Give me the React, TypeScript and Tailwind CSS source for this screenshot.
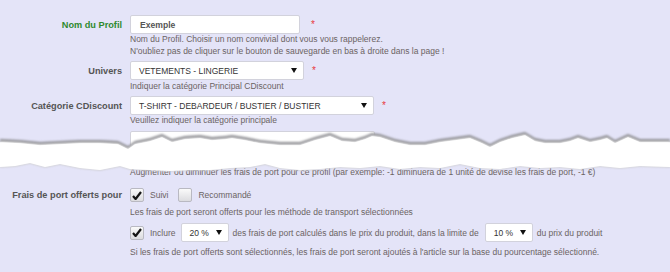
import React from "react";

const font = { fontFamily: '"Liberation Sans", Arial, sans-serif' };

function Star() {
  return <span className="ml-[8px] text-[10px] leading-none text-[#e8383d]">*</span>;
}

function Arrow() {
  return (
    <svg width="6" height="5" viewBox="0 0 6 5" className="shrink-0">
      <path d="M0 0 H6 L3 5 Z" fill="#111" />
    </svg>
  );
}

function Select({ value, w }: { value: string; w: string }) {
  return (
    <div
      className={`flex h-[19px] ${w} items-center justify-between rounded-[2px] border border-[#d2d2dc] bg-white pl-[8px] pr-[6px] text-[8.5px] text-[#333]`}
    >
      <span>{value}</span>
      <Arrow />
    </div>
  );
}

function Check({ on }: { on?: boolean }) {
  return (
    <div className="flex h-[14px] w-[14px] items-center justify-center rounded-[2px] border border-[#b9b9c2] bg-gradient-to-b from-[#fafafa] to-[#dcdce0]">
      {on ? (
        <svg width="10" height="9" viewBox="0 0 10 9">
          <path d="M1 5 L3.6 8 L9 1" fill="none" stroke="#151515" strokeWidth="2.2" strokeLinejoin="round" />
        </svg>
      ) : null}
    </div>
  );
}

function Row({
  label,
  green,
  children,
}: {
  label: string;
  green?: boolean;
  children: React.ReactNode;
}) {
  return (
    <div className="flex items-center text-[9px] leading-[12px]">
      <div
        className={`w-[122px] shrink-0 text-right text-[9.2px] font-bold ${green ? "text-[#2f8a2f]" : "text-[#555]"}`}
      >
        {label}
      </div>
      <div className="ml-[8px] flex items-center">{children}</div>
    </div>
  );
}

function Help({ children }: { children: React.ReactNode }) {
  return <div className="ml-[130px] text-[8.5px] leading-[12px] text-[#6b6363]">{children}</div>;
}

// torn paper edge, top and bottom outlines (x, y inside the 50px strip)
const top = [
  [0, 11], [20, 12], [40, 14], [60, 13], [80, 12], [100, 12], [118, 13], [128, 18], [135, 13],
  [150, 10], [162, 6], [172, 11], [185, 8], [200, 7], [212, 9], [225, 8], [232, 7], [245, 9],
  [260, 12], [280, 14], [300, 14], [315, 9], [330, 5], [342, 10], [355, 11], [365, 8], [372, 5],
  [380, 6], [395, 11], [410, 14], [425, 14], [440, 11], [455, 9], [470, 7], [482, 12], [490, 16],
  [500, 11], [512, 7], [525, 4], [535, 10], [545, 12], [560, 12], [570, 10], [578, 7], [590, 11],
  [600, 9], [607, 7], [615, 12], [628, 6], [640, 11], [655, 11], [670, 11],
];

const bottom = [
  [670, 41], [640, 40], [620, 42], [600, 40], [580, 43], [560, 41], [540, 42], [520, 40],
  [500, 43], [480, 42], [460, 38], [440, 42], [420, 41], [400, 43], [380, 40], [360, 42],
  [340, 41], [320, 43], [300, 44], [280, 42], [265, 38], [250, 41], [230, 42], [210, 44],
  [190, 44], [170, 45], [150, 44], [130, 43], [120, 40], [100, 44], [80, 42], [60, 38],
  [45, 41], [30, 37], [15, 40], [0, 41],
];

function Tear() {
  const t = (dy: number) => top.map(([x, y]) => `${x},${y + dy + 2}`).join(" L");
  const b = bottom.map(([x, y]) => `${x},${y}`).join(" L");
  return (
    <svg
      width="670"
      height="50"
      viewBox="0 0 670 50"
      className="pointer-events-none absolute left-0 top-0 z-10"
    >
      <defs>
        <filter id="soft" x="-5%" y="-20%" width="110%" height="140%">
          <feGaussianBlur stdDeviation="0.8" />
        </filter>
      </defs>
      <path d={`M${t(0)} L${b} Z`} fill="#909094" filter="url(#soft)" />
      <path d={`M${t(2.6)} L${b} Z`} fill="#ffffff" filter="url(#soft)" />
      <path d={`M${t(3.2)} L${b} Z`} fill="#ffffff" />
    </svg>
  );
}

export default function App() {
  return (
    <div className="h-[272px] w-[670px] overflow-hidden bg-[#e4e4f8]" style={font}>
      <div className="pt-[15px]">
        <Row label="Nom du Profil" green>
          <div className="flex h-[19px] w-[170px] items-center rounded-[2px] border border-[#d2d2dc] bg-white pl-[9px] text-[8.6px] font-bold text-[#555]">
            Exemple
          </div>
          <span className="ml-[3px]">
            <Star />
          </span>
        </Row>
        <div className="mt-[-1px]">
          <Help>Nom du Profil. Choisir un nom convivial dont vous vous rappelerez.</Help>
          <Help>N'oubliez pas de cliquer sur le bouton de sauvegarde en bas à droite dans la page !</Help>
        </div>

        <div className="mt-[4px]">
          <Row label="Univers">
            <Select value="VETEMENTS - LINGERIE" w="w-[174px]" />
            <Star />
          </Row>
          <Help>Indiquer la catégorie Principal CDiscount</Help>
        </div>

        <div className="mt-[4px]">
          <Row label="Catégorie CDiscount">
            <Select value="T-SHIRT - DEBARDEUR / BUSTIER / BUSTIER" w="w-[244px]" />
            <Star />
          </Row>
          <div className="mt-[-1px]">
            <Help>Veuillez indiquer la catégorie principale</Help>
          </div>
        </div>

        <div className="relative h-[40px] pt-[5px]">
          <div className="ml-[130px] h-[30px] w-[245px] rounded-[2px] border border-[#d2d2dc] bg-white" />
          <Tear />
        </div>

        <Help>
          Augmenter ou diminuer les frais de port pour ce profil (par exemple: -1 diminuera de 1 unité de devise les frais de port, -1 €)
        </Help>

        <div className="mt-[10px]">
          <Row label="Frais de port offerts pour">
            <Check on />
            <span className="ml-[6px] text-[8.5px] text-[#6b6363]">Suivi</span>
            <span className="ml-[10px]">
              <Check />
            </span>
            <span className="ml-[6px] text-[8.5px] text-[#6b6363]">Recommandé</span>
          </Row>
          <div className="mt-[4px]">
            <Help>Les frais de port seront offerts pour les méthode de transport sélectionnées</Help>
          </div>
        </div>

        <div className="ml-[130px] mt-[5px] flex items-center text-[8.5px] leading-[12px] text-[#6b6363]">
          <Check on />
          <span className="ml-[6px]">Inclure</span>
          <div className="ml-[5px]">
            <Select value="20 %" w="w-[48px]" />
          </div>
          <span className="ml-[4px]">des frais de port calculés dans le prix du produit, dans la limite de</span>
          <div className="ml-[6px]">
            <Select value="10 %" w="w-[48px]" />
          </div>
          <span className="ml-[4px]">du prix du produit</span>
        </div>
        <div className="mt-[4px]">
          <Help>
            Si les frais de port offerts sont sélectionnés, les frais de port seront ajoutés à l'article sur la base du pourcentage sélectionné.
          </Help>
        </div>
      </div>
    </div>
  );
}
